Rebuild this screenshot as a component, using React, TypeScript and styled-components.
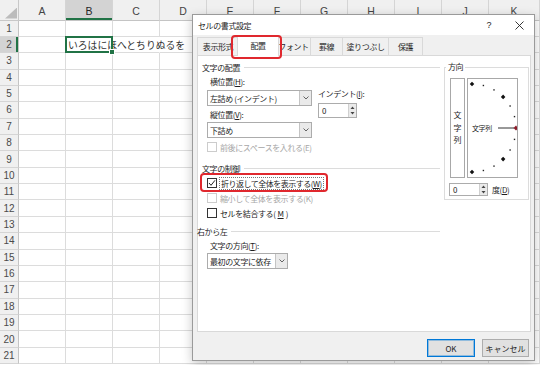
import * as React from 'react'
import styled, { createGlobalStyle } from 'styled-components'

const GlobalStyle = createGlobalStyle`
  html, body {
    margin: 0;
    padding: 0;
    background: #fff;
  }
  body {
    width: 540px;
    height: 365px;
    overflow: hidden;
    font-family: "Noto Sans CJK JP", "Noto Sans", sans-serif;
  }
`

const COLS = ['A', 'B', 'C', 'D', 'E', 'F', 'G', 'H', 'I', 'J', 'K']
const ROW_COUNT = 21
const TABS = [
  { label: '表示形式', w: 42 },
  { label: '配置', w: 38, active: true },
  { label: 'フォント', w: 34 },
  { label: '罫線', w: 32 },
  { label: '塗りつぶし', w: 46 },
  { label: '保護', w: 34 },
]
const DIAL_ANGLES = [90, 75, 60, 45, 30, 15, 0, -15, -30, -45, -60, -75, -90]

const ChevronDown = () => (
  <svg width="6" height="4" viewBox="0 0 6 4">
    <polyline points="0.5,0.5 3,3 5.5,0.5" fill="none" stroke="#555" strokeWidth="0.9" />
  </svg>
)

const SpinArrows = () => (
  <svg width="5" height="11" viewBox="0 0 5 11">
    <polygon points="0.5,4 2.5,1.5 4.5,4" fill="#444" />
    <polygon points="0.5,7 2.5,9.5 4.5,7" fill="#444" />
  </svg>
)

const CheckMark = () => (
  <svg width="8" height="8" viewBox="0 0 8 8">
    <polyline points="1,4 3,6.3 7,1.3" fill="none" stroke="#222" strokeWidth="1" />
  </svg>
)

const CloseIcon = () => (
  <svg width="9" height="9" viewBox="0 0 9 9">
    <line x1="0.5" y1="0.5" x2="8.5" y2="8.5" stroke="#222" strokeWidth="0.9" />
    <line x1="8.5" y1="0.5" x2="0.5" y2="8.5" stroke="#222" strokeWidth="0.9" />
  </svg>
)

const Dial = () => (
  <svg width="49" height="98" viewBox="0 0 49 98">
    {DIAL_ANGLES.map(a => {
      const r = (a * Math.PI) / 180
      const x = 4 + 44 * Math.cos(r)
      const y = 49 - 44 * Math.sin(r)
      if (a === 0) {
        return <rect key={a} x={x - 1.8} y={y - 1.8} width="3.6" height="3.6" fill="#8b1c2a" transform={`rotate(45 ${x} ${y})`} />
      }
      if (a % 45 === 0) {
        return <rect key={a} x={x - 1.6} y={y - 1.6} width="3.2" height="3.2" fill="#111" transform={`rotate(45 ${x} ${y})`} />
      }
      return <rect key={a} x={x - 0.7} y={y - 0.7} width="1.4" height="1.4" fill="#222" />
    })}
    <line x1="30" y1="49" x2="46" y2="49" stroke="#333" strokeWidth="1" />
    <text x="4" y="51.6" fontSize="7" fill="#222" fontFamily='"Noto Sans CJK JP", sans-serif'>文字列</text>
  </svg>
)

export default function App() {
  return (
    <Page>
      <GlobalStyle />
      <Sheet>
        <Corner />
        {COLS.map(c => (
          <ColHeader key={c} $active={c === 'B'}>{c}</ColHeader>
        ))}
        {Array.from({ length: ROW_COUNT }, (_, i) => i + 1).map(row => (
          <React.Fragment key={row}>
            <RowHeader $active={row === 2}>{row}</RowHeader>
            {COLS.map(c => {
              const selected = row === 2 && c === 'B'
              return (
                <Cell key={c} $noRight={row === 2 && (c === 'C' || c === 'D')}>
                  {selected && (
                    <>
                      <CellText>いろはにほへとちりぬるを</CellText>
                      <Selection />
                      <FillHandle />
                    </>
                  )}
                </Cell>
              )
            })}
          </React.Fragment>
        ))}
      </Sheet>

      <Dialog>
        <TitleBar>
          <Title>セルの書式設定</Title>
          <TitleButton>?</TitleButton>
          <TitleButton><CloseIcon /></TitleButton>
        </TitleBar>

        <TabStrip>
          {TABS.map((t, i) => (
            <Tab key={t.label} $w={t.w} $active={t.active} $first={i === 0}>
              {t.label}
            </Tab>
          ))}
        </TabStrip>

        <TabPage>
          <LeftCol>
            <SectionHead $top={0}>文字の配置</SectionHead>
            <FieldBlock>
              <Fields>
                <FieldLabel $top={4}>横位置(<u>H</u>):</FieldLabel>
                <Select $w={105} $top={2}>
                  <SelectText>左詰め (インデント)</SelectText>
                  <SelectButton><ChevronDown /></SelectButton>
                </Select>
                <FieldLabel $top={3}>縦位置(<u>V</u>):</FieldLabel>
                <Select $w={105} $top={1}>
                  <SelectText>下詰め</SelectText>
                  <SelectButton><ChevronDown /></SelectButton>
                </Select>
              </Fields>
              <IndentCol>
                <FieldLabel $top={0} $flush>インデント(<u>I</u>):</FieldLabel>
                <Spinner $w={39} $top={3} $h={15}>
                  <SpinValue>0</SpinValue>
                  <SpinButtons><SpinArrows /></SpinButtons>
                </Spinner>
              </IndentCol>
            </FieldBlock>
            <CheckRow $top={3} $disabled>
              <CheckBox $disabled />
              前後にスペースを入れる(E)
            </CheckRow>

            <SectionHead $top={10}>文字の制御</SectionHead>
            <CheckRow $top={4} $ring>
              <CheckBox><CheckMark /></CheckBox>
              <FocusLabel>折り返して全体を表示する(<u>W</u>)</FocusLabel>
            </CheckRow>
            <CheckRow $top={3} $disabled>
              <CheckBox $disabled />
              縮小して全体を表示する(K)
            </CheckRow>
            <CheckRow $top={3}>
              <CheckBox />
              セルを結合する(<u>M</u>)
            </CheckRow>

            <SectionHead $top={7} $outdent>右から左</SectionHead>
            <FieldBlock>
              <Fields>
                <FieldLabel $top={4}>文字の方向(<u>T</u>):</FieldLabel>
                <Select $w={81} $top={1}>
                  <SelectText>最初の文字に依存</SelectText>
                  <SelectButton><ChevronDown /></SelectButton>
                </Select>
              </Fields>
            </FieldBlock>
          </LeftCol>

          <Orientation>
            <Legend>方向</Legend>
            <DirRow>
              <VerticalBox>
                <span>文</span>
                <span>字</span>
                <span>列</span>
              </VerticalBox>
              <DialBox><Dial /></DialBox>
            </DirRow>
            <DegreeRow>
              <Spinner $w={39} $top={0} $h={13}>
                <SpinValue>0</SpinValue>
                <SpinButtons><SpinArrows /></SpinButtons>
              </Spinner>
              <DegreeLabel>度(<u>D</u>)</DegreeLabel>
            </DegreeRow>
          </Orientation>
        </TabPage>

        <Footer>
          <Button $w={48} $default>OK</Button>
          <Button $w={47}>キャンセル</Button>
        </Footer>
      </Dialog>
    </Page>
  )
}

const Page = styled.div`
  position: relative;
  width: 540px;
  height: 365px;
  overflow: hidden;
`

/* spreadsheet behind the dialog */
const Sheet = styled.div`
  display: grid;
  grid-template-columns: 19px repeat(10, 47px) 1fr;
  grid-template-rows: 20.5px repeat(21, 16.36px);
  width: 540px;
  height: 365px;
  font-family: "Liberation Sans", Arial, sans-serif;
`

const Corner = styled.div`
  position: relative;
  background: #f0f0f0;
  border-right: 1px solid #c8c8c8;
  border-bottom: 1px solid #c8c8c8;
  box-sizing: border-box;
  &::after {
    content: '';
    position: absolute;
    right: 1px;
    bottom: 1px;
    width: 12px;
    height: 11px;
    background: #bcbcbc;
    clip-path: polygon(100% 0, 100% 100%, 0 100%);
  }
`

const ColHeader = styled.div<{ $active?: boolean }>`
  display: flex;
  align-items: center;
  justify-content: center;
  padding-top: 2px;
  box-sizing: border-box;
  background: ${p => (p.$active ? '#d3d3d3' : '#f0f0f0')};
  border-right: 1px solid #d5d5d5;
  border-bottom: 1px solid #c4c4c4;
  box-shadow: ${p => (p.$active ? 'inset 0 -2px 0 #217346' : 'none')};
  font-size: 10.5px;
  color: ${p => (p.$active ? '#262626' : '#444')};
`

const RowHeader = styled.div<{ $active?: boolean }>`
  display: flex;
  align-items: center;
  justify-content: center;
  box-sizing: border-box;
  background: ${p => (p.$active ? '#d3d3d3' : '#f0f0f0')};
  border-right: 1px solid #c4c4c4;
  border-bottom: 1px solid #d5d5d5;
  box-shadow: ${p => (p.$active ? 'inset -2px 0 0 #217346' : 'none')};
  font-size: 10px;
  color: #4a4a4a;
`

const Cell = styled.div<{ $noRight?: boolean }>`
  position: relative;
  display: flex;
  align-items: center;
  box-sizing: border-box;
  border-right: 1px solid ${p => (p.$noRight ? 'transparent' : '#dcdcdc')};
  border-bottom: 1px solid #dcdcdc;
`

const CellText = styled.span`
  position: relative;
  z-index: 1;
  padding-left: 2px;
  white-space: nowrap;
  font-family: "Noto Sans CJK JP", sans-serif;
  font-size: 9.8px;
  color: #333;
`

const Selection = styled.div`
  position: absolute;
  left: -1px;
  top: -1px;
  right: -1px;
  bottom: -1px;
  border: 2px solid #217346;
  z-index: 2;
`

const FillHandle = styled.div`
  position: absolute;
  right: -3px;
  bottom: -3px;
  width: 4px;
  height: 4px;
  background: #217346;
  border: 1px solid #fff;
  z-index: 3;
`

/* dialog */
const Dialog = styled.div`
  position: absolute;
  left: 192px;
  top: 14px;
  width: 343px;
  height: 347px;
  box-sizing: border-box;
  border: 1px solid #9a9a9a;
  background: #f0f0f0;
  box-shadow: 0 3px 10px rgba(0, 0, 0, 0.22);
  display: flex;
  flex-direction: column;
  font-family: "Noto Sans CJK JP", "Noto Sans", sans-serif;
  font-size: 8px;
  letter-spacing: -0.4px;
  color: #1e1e1e;
  z-index: 5;
`

const TitleBar = styled.div`
  height: 20px;
  flex-shrink: 0;
  display: flex;
  align-items: center;
  padding-left: 5px;
  background: #fff;
`

const Title = styled.span`
  flex: 1;
  font-size: 8px;
`

const TitleButton = styled.div`
  width: 30px;
  height: 20px;
  display: flex;
  align-items: center;
  justify-content: center;
  font-family: "Liberation Sans", Arial, sans-serif;
  font-size: 9px;
  letter-spacing: 0;
`

const TabStrip = styled.div`
  height: 20px;
  flex-shrink: 0;
  display: flex;
  align-items: flex-end;
  padding-left: 4px;
  position: relative;
  z-index: 1;
`

const Tab = styled.div<{ $w: number; $active?: boolean; $first?: boolean }>`
  position: relative;
  box-sizing: border-box;
  width: ${p => p.$w + (p.$active ? 4 : 0)}px;
  height: ${p => (p.$active ? 21 : 18)}px;
  margin: ${p => (p.$active ? '0 -2px -1px -2px' : '0')};
  display: flex;
  align-items: center;
  justify-content: center;
  padding-bottom: ${p => (p.$active ? 2 : 0)}px;
  background: ${p => (p.$active ? '#fff' : '#f0f0f0')};
  border-top: 1px solid #d9d9d9;
  border-right: 1px solid #d9d9d9;
  border-left: ${p => (p.$active || p.$first ? '1px solid #d9d9d9' : 'none')};
  z-index: ${p => (p.$active ? 2 : 1)};
  &::after {
    content: '';
    display: ${p => (p.$active ? 'block' : 'none')};
    position: absolute;
    left: -7px;
    right: -4px;
    top: -1px;
    bottom: -3px;
    border: 2px solid #e0282e;
    border-radius: 4px;
  }
`

const TabPage = styled.div`
  flex: 1;
  display: flex;
  gap: 4px;
  margin: 0 3px 0 4px;
  padding: 6px 1px 0 3px;
  box-sizing: border-box;
  background: #fff;
  border: 1px solid #d9d9d9;
`

const LeftCol = styled.div`
  width: 239px;
  display: flex;
  flex-direction: column;
`

const SectionHead = styled.div<{ $top: number; $outdent?: boolean }>`
  display: flex;
  align-items: center;
  gap: 4px;
  height: 10px;
  margin-top: ${p => p.$top}px;
  margin-left: ${p => (p.$outdent ? -4 : 1)}px;
  white-space: nowrap;
  &::after {
    content: '';
    flex: 1;
    height: 1px;
    background: #dcdcdc;
  }
`

const FieldBlock = styled.div`
  display: flex;
  gap: 6px;
  padding-left: 6px;
`

const Fields = styled.div`
  display: flex;
  flex-direction: column;
`

const IndentCol = styled.div`
  display: flex;
  flex-direction: column;
  padding-top: 16px;
`

const FieldLabel = styled.div<{ $top: number; $flush?: boolean }>`
  height: 12px;
  line-height: 12px;
  margin-top: ${p => p.$top}px;
  padding-left: ${p => (p.$flush ? 0 : 3)}px;
  white-space: nowrap;
`

const Select = styled.div<{ $w: number; $top: number }>`
  width: ${p => p.$w}px;
  height: 16px;
  margin-top: ${p => p.$top}px;
  box-sizing: border-box;
  display: flex;
  align-items: stretch;
  background: #fff;
  border: 1px solid #acacac;
`

const SelectText = styled.div`
  flex: 1;
  display: flex;
  align-items: center;
  padding-left: 2px;
  white-space: nowrap;
`

const SelectButton = styled.div`
  width: 11px;
  display: flex;
  align-items: center;
  justify-content: center;
  background: #eaeaea;
  border-left: 1px solid #c4c4c4;
`

const Spinner = styled.div<{ $w: number; $top: number; $h: number }>`
  width: ${p => p.$w}px;
  height: ${p => p.$h}px;
  margin-top: ${p => p.$top}px;
  box-sizing: border-box;
  display: flex;
  background: #fff;
  border: 1px solid #acacac;
`

const SpinValue = styled.div`
  flex: 1;
  display: flex;
  align-items: center;
  padding-left: 3px;
`

const SpinButtons = styled.div`
  width: 7px;
  display: flex;
  align-items: center;
  justify-content: center;
  background: #eaeaea;
  border-left: 1px solid #d0d0d0;
`

const CheckRow = styled.div<{ $top: number; $disabled?: boolean; $ring?: boolean }>`
  position: relative;
  align-self: flex-start;
  display: flex;
  align-items: center;
  gap: 2px;
  height: 12px;
  margin-top: ${p => p.$top}px;
  margin-left: 6px;
  white-space: nowrap;
  color: ${p => (p.$disabled ? '#a6a6a6' : 'inherit')};
  &::after {
    content: '';
    display: ${p => (p.$ring ? 'block' : 'none')};
    position: absolute;
    left: -7px;
    right: -5px;
    top: -4px;
    bottom: -3px;
    border: 2px solid #e0282e;
    border-radius: 4px;
  }
`

const CheckBox = styled.div<{ $disabled?: boolean }>`
  width: 10px;
  height: 10px;
  box-sizing: border-box;
  display: flex;
  align-items: center;
  justify-content: center;
  background: #fff;
  border: 1px solid ${p => (p.$disabled ? '#cccccc' : '#333')};
  margin-right: 1px;
`

const FocusLabel = styled.span`
  padding: 0 1px;
  line-height: 11px;
  letter-spacing: -0.5px;
  outline: 1px dotted #777;
`

const Orientation = styled.fieldset`
  align-self: flex-start;
  width: 85px;
  height: 138px;
  min-width: 0;
  margin: 0;
  padding: 0 4px 4px 5px;
  box-sizing: border-box;
  border: 1px solid #dcdcdc;
`

const Legend = styled.legend`
  height: 10px;
  line-height: 10px;
  padding: 0 2px;
  margin-left: -4px;
`

const DirRow = styled.div`
  display: flex;
  gap: 2px;
  margin-top: 6px;
`

const VerticalBox = styled.div`
  width: 15px;
  height: 100px;
  box-sizing: border-box;
  display: flex;
  flex-direction: column;
  align-items: center;
  justify-content: center;
  line-height: 12.5px;
  letter-spacing: 0;
  border: 1px solid #a8a8a8;
`

const DialBox = styled.div`
  width: 51px;
  height: 100px;
  box-sizing: border-box;
  border: 1px solid #a8a8a8;
  svg {
    display: block;
  }
`

const DegreeRow = styled.div`
  display: flex;
  align-items: center;
  margin-top: 5px;
  margin-left: -1px;
`

const DegreeLabel = styled.span`
  margin-left: 4px;
`

const Footer = styled.div`
  height: 28px;
  flex-shrink: 0;
  display: flex;
  justify-content: flex-end;
  align-items: flex-start;
  gap: 7px;
  padding: 7px 5px 0 0;
  box-sizing: border-box;
`

const Button = styled.div<{ $w: number; $default?: boolean }>`
  width: ${p => p.$w}px;
  height: 18px;
  box-sizing: border-box;
  display: flex;
  align-items: center;
  justify-content: center;
  background: #e1e1e1;
  border: 1px solid ${p => (p.$default ? '#0078d7' : '#adadad')};
  box-shadow: ${p => (p.$default ? 'inset 0 0 0 1px rgba(0, 120, 215, 0.35)' : 'none')};
  letter-spacing: 0;
`
